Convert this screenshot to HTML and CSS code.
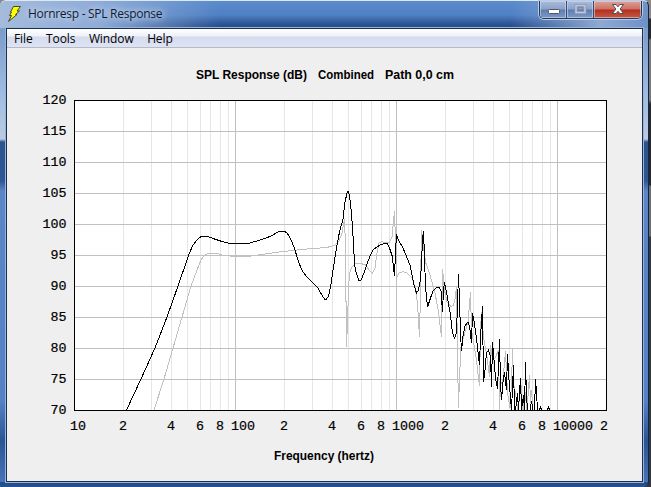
FILE: index.html
```
<!DOCTYPE html>
<html lang="en">
<head>
    <meta charset="UTF-8">
    <title>Hornresp - SPL Response</title>
    <link rel="stylesheet" href="styles.css">
</head>
<body>
    <div class="window">
        <div class="titlebar">
            <svg class="bolt" width="16" height="18" viewBox="0 0 16 18">
                <path d="M6.5 1.5H13.5L10 6H12.5L8.5 9.5H10L1.5 16.5L4.5 10.5H2.5L4.5 7H3.5Z" fill="#ffff00" stroke="#4a4a28" stroke-width="1"/>
            </svg>
            <span class="title">Hornresp - SPL Response</span>
            <div class="buttons">
                <div class="btn min">
                    <svg width="26" height="17"><rect x="8.5" y="8.5" width="11" height="4" rx="1" fill="#fff" stroke="#535666"/></svg>
                </div>
                <div class="btn max">
                    <svg width="26" height="17" fill="none"><rect x="9" y="4.5" width="9" height="7" stroke="#8791ad" stroke-width="3"/><rect x="9" y="4.5" width="9" height="7" stroke="#bcc8e0" stroke-width="1.5"/><rect x="11.5" y="6.5" width="4" height="2" stroke="#7789af"/></svg>
                </div>
                <div class="btn close">
                    <svg width="47" height="17"><path d="M18.5 3.5h3.6l1.9 2.3 1.9-2.3h3.6l-3.4 4.5 3.4 4.5h-3.6l-1.9-2.2-1.9 2.2h-3.6l3.4-4.5z" fill="#fff" stroke="#544a54"/></svg>
                </div>
            </div>
        </div>
        <div class="client">
            <div class="menu">
                <span>File</span>
                <span>Tools</span>
                <span>Window</span>
                <span>Help</span>
            </div>
            <svg class="chart" width="635" height="433" viewBox="7 48 635 433">
                <g class="caption">
                    <text x="196" y="79" textLength="111" lengthAdjust="spacingAndGlyphs">SPL Response (dB)</text>
                    <text x="318" y="79" textLength="56" lengthAdjust="spacingAndGlyphs">Combined</text>
                    <text x="385" y="79" textLength="69" lengthAdjust="spacingAndGlyphs">Path 0,0 cm</text>
                    <text x="274" y="460" textLength="100" lengthAdjust="spacingAndGlyphs">Frequency (hertz)</text>
                </g>

                <rect x="74" y="100" width="532" height="310" fill="#fff"/>
                <path class="minor" d="M123.5 101V410M151.5 101V410M171.5 101V410M187.5 101V410M200.5 101V410M210.5 101V410M220.5 101V410M228.5 101V410
                    M284.5 101V410M312.5 101V410M332.5 101V410M348.5 101V410M361.5 101V410M371.5 101V410M381.5 101V410M389.5 101V410
                    M445.5 101V410M473.5 101V410M493.5 101V410M509.5 101V410M522.5 101V410M532.5 101V410M542.5 101V410M550.5 101V410"/>
                <path class="major" d="M75 131.5H606M75 162.5H606M75 193.5H606M75 224.5H606M75 255.5H606M75 286.5H606M75 317.5H606M75 348.5H606M75 379.5H606
                    M235.5 101V410M396.5 101V410M557.5 101V410"/>

                <!-- previous result -->
                <polyline class="trace old" points="154,410 164,379 173,348 182,317 191,286 197,270 201,260 204,256 208,253.5 217,253.5 222,255 230,256 232,256.5 248,256.5 258,255 283,251.5 307,249 327,247.5 335,245 339,241 342,233 344.5,219 345.5,247 345.5,301 346.5,301 346.5,347 347.5,323 348.5,290 349.5,273 352,267 355,264 360,263.5 365,264.5 369,270 372.5,273.5 375,268 377,253 379,243 381.5,241.5 385,242.5 389,243 392,237 394.5,211 395.5,243 396.5,278 399,273 403,271.5 407,273 412,278 415,287 417.5,303 419.5,337 420.5,290 421.5,230 423.5,247 425.5,262 430,275 435,293 438.5,312 441.5,337 442.5,269 444.5,290 447,302 451,306.5 453.5,305 455.5,297 456.5,286 457.5,356 458.5,408 459.5,377 461,347 465,332 468,322 470.5,292 471.5,330 476,357 479.5,386 480.5,330 481.5,312 483.5,337 487,357 489.5,377 490.5,345 492.5,360 495,358 498.5,350 499.5,410 500.5,385 503,380 505.5,351 507.5,393 510,408 511.5,385 512.5,349 513.5,383 516,397 518,410 521,385 523,410 525,392 527,410 529.5,375 530.5,403 531.5,390 533,410"/>
                <!-- current result -->
                <polyline class="trace" points="126.5,410 141,379 155,348 167,317 178,286 187,260 189,254 193,245 197,240 201,236.5 208,236.5 213,238.5 222,241.5 228,243 233,243.5 248,243.5 257,241 270,236.5 278,232 282,231.5 285,231.5 287,233 289,236 291,240 294,247 299,263 301,268 303,272 307,277 313,283 318,288 323,297 325,299.5 326.5,299 328.5,296 330.5,287 333.5,267 337,245 339.5,232 343,219 345,202 347.5,191 348.5,191 349.5,196 351.5,213 353.5,243 354.5,265 356.5,274 359,280.5 361,280 364,273 367,264 370,256 373,250 376,247.5 380,245 384,243.5 387,243.5 389.5,248 392.5,257 393.5,268 394.5,276 395.5,253 396.5,234 398,239 403,248 410,265 414,285 416.5,293 418.5,290 420.5,279 421.5,263 422.5,240 423.5,231 424.5,257 425.5,287 427.5,307 430.5,298 433,291 437,287 439,287 441,291 442.5,312 443.5,290 444.5,282 447,295 450.5,315 452.5,333 454.5,338 456.5,333 457.5,304 458.5,274 459.5,300 460.5,333 461.5,351 463,336 465,326 468,322 469.5,326 471.5,343 472.5,313 474.5,324 476.5,339 479.5,365 480.5,337 482.5,306 483.5,382 485,370 486.5,353 488.5,350 490.5,357 491.5,387 492.5,342 494,360 495.5,378 497.5,389 498.5,365 499.5,339 500.5,383 501.5,400 503,382 504.5,372 506.5,390 507.5,354 509,380 511.5,410 513.5,365 514.5,410 515.5,410 517.5,393 518.5,410 519.5,393 520.5,378 521.5,410 523.5,395 524.5,410 525.5,362 526.5,395 527.5,410 530,410 531.5,401 533,410 534.5,410 535.5,379 536.5,392 537.5,410 539,410 540.5,407 541.5,410 547,410 548.5,407 549.5,410"/>
                <rect class="frame" x="74.5" y="100.5" width="532" height="310"/>

                <g class="scale" text-anchor="end">
                    <text x="66.5" y="104">120</text>
                    <text x="66.5" y="135">115</text>
                    <text x="66.5" y="166">110</text>
                    <text x="66.5" y="197">105</text>
                    <text x="66.5" y="228">100</text>
                    <text x="66.5" y="259">95</text>
                    <text x="66.5" y="290">90</text>
                    <text x="66.5" y="321">85</text>
                    <text x="66.5" y="352">80</text>
                    <text x="66.5" y="383">75</text>
                    <text x="66.5" y="414">70</text>
                </g>
                <g class="scale">
                    <text x="70" y="430">10</text>
                    <text x="119" y="430">2</text>
                    <text x="167" y="430">4</text>
                    <text x="196" y="430">6</text>
                    <text x="216" y="430">8</text>
                    <text x="231" y="430">100</text>
                    <text x="280" y="430">2</text>
                    <text x="328" y="430">4</text>
                    <text x="357" y="430">6</text>
                    <text x="377" y="430">8</text>
                    <text x="392" y="430">1000</text>
                    <text x="441" y="430">2</text>
                    <text x="489" y="430">4</text>
                    <text x="518" y="430">6</text>
                    <text x="538" y="430">8</text>
                    <text x="553" y="430">10000</text>
                    <text x="600" y="430">2</text>
                </g>
            </svg>
        </div>
    </div>
</body>
</html>
```
FILE: styles.css
```
* {
    box-sizing: border-box;
}
body {
    margin: 0;
    width: 651px;
    height: 487px;
    overflow: hidden;
    background: linear-gradient(#8a8a8a 0 18px, #25272b 19px 38px, #77787b 40px 100px, #24272c 104px 185px, #6c6e73 186px 236px, #333840 237px 100%);
}
.window {
    width: 649px;
    height: 487px;
    padding: 0 6px 5px;
    border-top: 1px solid #dce8f5;
    border-right: 1px solid #18243a;
    border-radius: 6px 6px 5px 0;
    background:
        linear-gradient(90deg, #a4bbdc, #8eabd7 100px, rgba(110,150,210,0) 220px) 0 0 / 100% 27px no-repeat,
        linear-gradient(90deg, rgba(150,175,215,0) 510px, #8fa9d2 600px, #6d91c8) 0 0 / 100% 27px no-repeat,
        linear-gradient(#5b8bcb, #4f80c4 14px, #2c5594 23px, #244b88 27px) 0 0 / 100% 27px no-repeat,
        linear-gradient(#214a89, #28518f) 0 100% / 100% 5px no-repeat,
        linear-gradient(#7a9ccc 27px, #a3bfe3 100px, #bccbdf 138px, #2b548f 141px, #2d5795 180px, #5b86c7 190px, #5482c6 400px, #2a5595 440px, #4a78bb);
}
.titlebar {
    display: flex;
    height: 27px;
}
.bolt {
    margin: 4px 0 0 1px;
}
.title {
    flex: 1;
    padding: 5px 0 0 5px;
    font: 12px/15px "Open Sans", "Noto Sans", sans-serif;
    letter-spacing: -0.28px;
    color: #111c33;
    text-shadow: 0 0 6px #cbdaf0, 0 0 8px #cbdaf0;
}
.buttons {
    display: flex;
    height: 18px;
    border: 1px solid #253657;
    border-top: 0;
    border-radius: 0 0 5px 5px;
    box-shadow: 0 0 0 1px #b9cae4;
    overflow: hidden;
}
.btn {
    height: 17px;
    border-right: 1px solid #354a72;
    background: linear-gradient(#a9bbda, #8ba3ca 8px, #5e7daf 9px, #7b9ac8);
    box-shadow: inset 0 0 0 1px rgba(215,228,245,0.55);
}
.btn svg {
    display: block;
}
.min {
    width: 27px;
}
.max {
    width: 27px;
}
.close {
    width: 47px;
    border-right: 0;
    background: linear-gradient(#dca298, #cd7163 8px, #b32f1e 9px, #c65a42);
}
.client {
    width: 637px;
    height: 454px;
    border: 1px solid #1c2f50;
    background: #efefef;
    box-shadow: 0 0 0 1px #9ab4d8;
}
.menu {
    display: flex;
    gap: 13.5px;
    height: 19px;
    padding-left: 7px;
    border-bottom: 1px solid #b5b9c8;
    background: linear-gradient(#fff, #eef1f8 7px, #d5dbed 8px, #dfe4f3);
    font: 12px/20px "Open Sans", "Noto Sans", sans-serif;
    letter-spacing: -0.1px;
    color: #000;
}
.chart {
    display: block;
}
.caption {
    font: bold 12px "Liberation Sans", Arial, sans-serif;
}
.scale {
    font: 13.33px "Liberation Mono", "Courier New", monospace;
    stroke: #000;
    stroke-width: 0.2px;
}
.minor, .major, .trace, .frame {
    fill: none;
    stroke-width: 1px;
    shape-rendering: crispEdges;
}
.minor {
    stroke: #e6e6e6;
}
.major {
    stroke: #c0c0c0;
}
.trace {
    stroke: #000;
}
.old {
    stroke: #c0c0c0;
}
.frame {
    stroke: #000;
}
```
